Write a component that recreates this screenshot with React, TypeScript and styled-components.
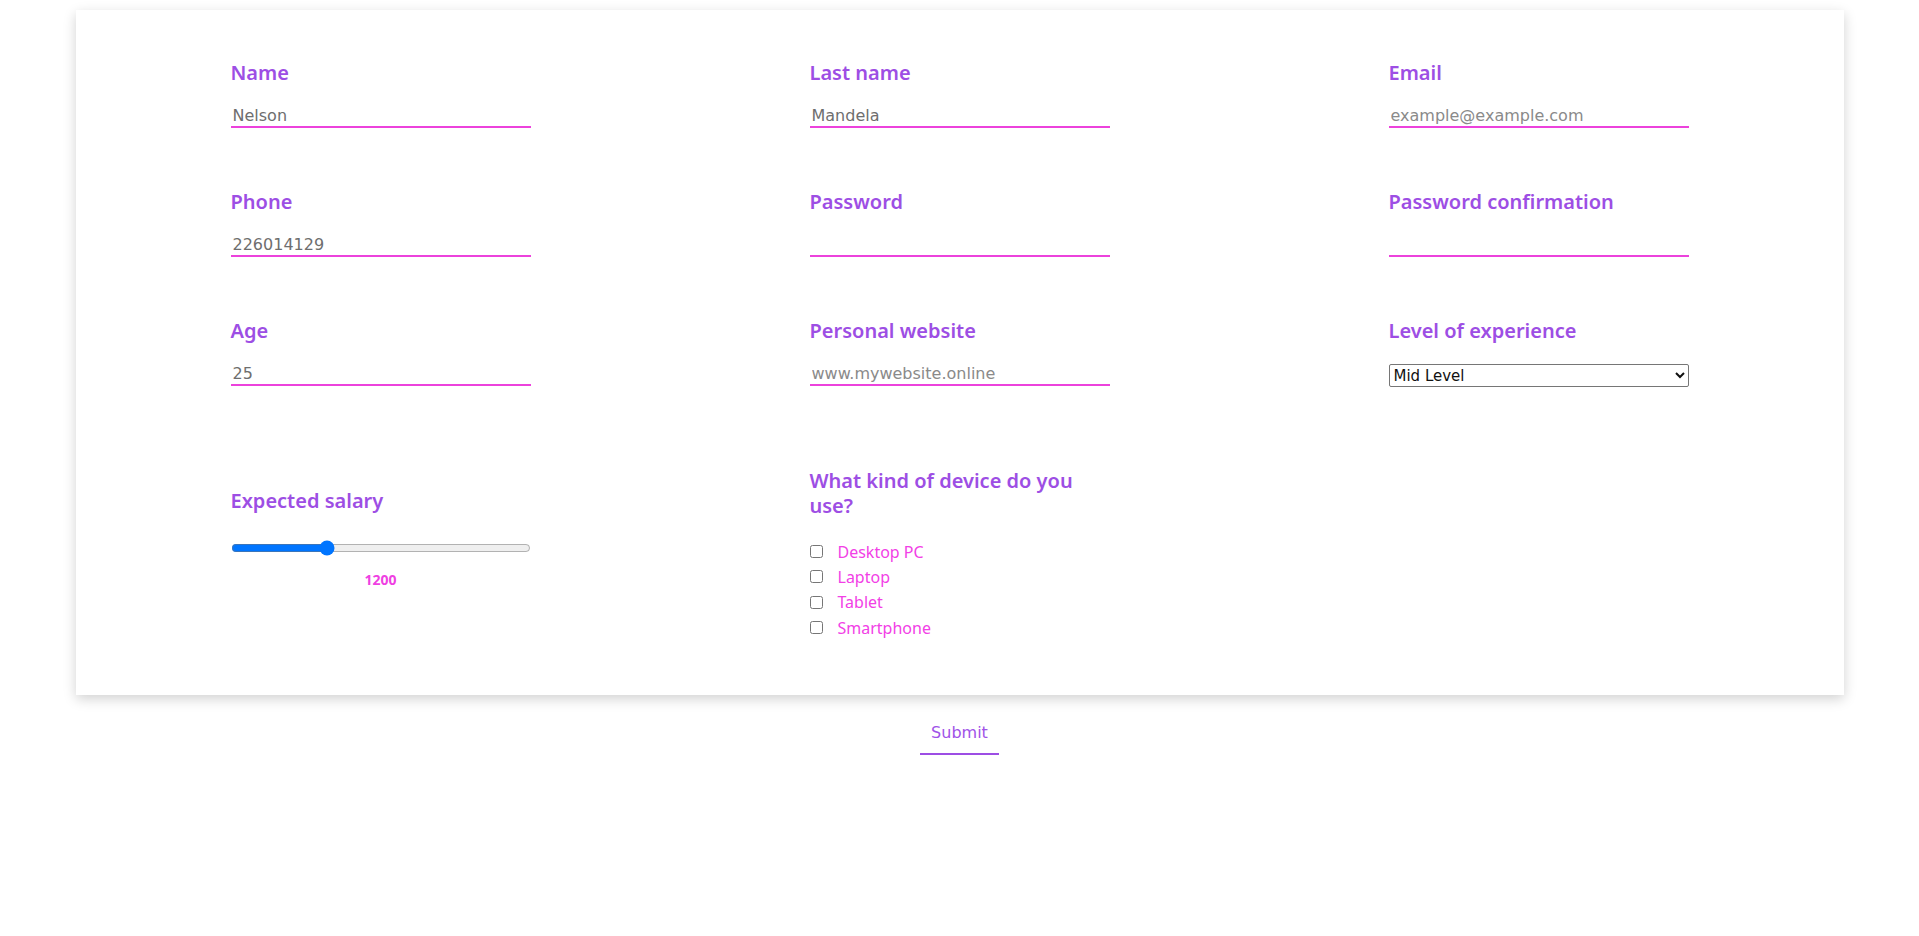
import React, { useState } from "react";
import styled, { createGlobalStyle } from "styled-components";

const Global = createGlobalStyle`
  html, body { margin: 0; padding: 0; background: #ffffff; }
  body { font-family: "DejaVu Sans", sans-serif; }
  * { box-sizing: border-box; }
`;

const Page = styled.main`
  display: flex;
  flex-direction: column;
  align-items: center;
  padding-top: 10px;
`;

const Card = styled.form`
  width: 1768px;
  background: #ffffff;
  box-shadow: 0 4px 12px rgba(0, 0, 0, 0.18);
  padding: 50px 0 55px;
`;

const Grid = styled.div`
  display: grid;
  grid-template-columns: repeat(3, 300px);
  column-gap: 279px;
  row-gap: 61px;
  justify-content: center;
  align-items: start;
`;

const Field = styled.div<{ $shift?: number }>`
  display: flex;
  flex-direction: column;
  margin-top: ${(p) => p.$shift ?? 0}px;
`;

const Label = styled.label<{ $gap?: number }>`
  font-family: "Noto Sans", sans-serif;
  font-weight: 600;
  font-size: 20px;
  line-height: 25px;
  color: #9d4ee4;
  margin-bottom: ${(p) => p.$gap ?? 19}px;
`;

const TextInput = styled.input`
  width: 300px;
  border: none;
  border-bottom: 2px solid #ec42dc;
  outline: none;
  padding: 1px 2px;
  font-family: "DejaVu Sans", sans-serif;
  font-size: 16px;
  line-height: 20px;
  height: 24px;
  color: #6e6e6e;
  background: transparent;
  &::placeholder { color: #8a8a8a; }
`;

const Select = styled.select`
  width: 300px;
  height: 23px;
  margin-top: 2px;
  font-family: "DejaVu Sans", sans-serif;
  font-size: 15px;
  color: #111;
  border: 1px solid #767676;
  border-radius: 2px;
  background: #fff;
`;

const Range = styled.input`
  width: 300px;
  margin: 27px 0 0;
  accent-color: #0075ff;
`;

const RangeValue = styled.output`
  display: block;
  text-align: center;
  font-family: "Noto Sans", sans-serif;
  font-weight: 700;
  font-size: 14px;
  line-height: 18px;
  color: #ef40e2;
  margin-top: 15px;
`;

const CheckList = styled.ul`
  list-style: none;
  margin: 21px 0 0;
  padding: 0;
  display: flex;
  flex-direction: column;
`;

const CheckItem = styled.li`
  display: flex;
  align-items: center;
  height: 25.33px;
`;

const Box = styled.input`
  width: 13px;
  height: 13px;
  margin: 0 15px 0 0;
`;

const CheckText = styled.label`
  font-family: "Noto Sans", sans-serif;
  font-size: 16px;
  color: #f240e6;
`;

const Submit = styled.button`
  margin-top: 18px;
  background: none;
  border: none;
  border-bottom: 2px solid #9d4ee4;
  padding: 10px 11px 10px;
  font-family: "DejaVu Sans", sans-serif;
  font-size: 16px;
  line-height: 20px;
  color: #a052e8;
  cursor: pointer;
`;

type TF = { id: string; label: string; value?: string; placeholder?: string; type?: string };

const textFields: TF[] = [
  { id: "name", label: "Name", value: "Nelson" },
  { id: "lastname", label: "Last name", value: "Mandela" },
  { id: "email", label: "Email", placeholder: "example@example.com", type: "email" },
  { id: "phone", label: "Phone", value: "226014129" },
  { id: "password", label: "Password", type: "password" },
  { id: "confirm", label: "Password confirmation", type: "password" },
  { id: "age", label: "Age", value: "25" },
  { id: "website", label: "Personal website", placeholder: "www.mywebsite.online" },
];

const devices = ["Desktop PC", "Laptop", "Tablet", "Smartphone"];

export default function App() {
  const [salary, setSalary] = useState(1200);
  return (
    <>
      <Global />
      <Page>
        <Card onSubmit={(e) => e.preventDefault()}>
          <Grid>
            {textFields.map((f) => (
              <Field key={f.id}>
                <Label htmlFor={f.id}>{f.label}</Label>
                <TextInput
                  id={f.id}
                  type={f.type ?? "text"}
                  defaultValue={f.value}
                  placeholder={f.placeholder}
                />
              </Field>
            ))}
            <Field>
              <Label htmlFor="level">Level of experience</Label>
              <Select id="level" defaultValue="mid">
                <option value="junior">Junior</option>
                <option value="mid">Mid Level</option>
                <option value="senior">Senior</option>
              </Select>
            </Field>
            <Field $shift={40}>
              <Label htmlFor="salary" $gap={0}>Expected salary</Label>
              <Range
                id="salary"
                type="range"
                min={200}
                max={3400}
                value={salary}
                onChange={(e) => setSalary(Number(e.target.value))}
              />
              <RangeValue htmlFor="salary">{salary}</RangeValue>
            </Field>
            <Field $shift={20}>
              <Label as="span" $gap={0}>What kind of device do you use?</Label>
              <CheckList>
                {devices.map((d) => (
                  <CheckItem key={d}>
                    <Box type="checkbox" id={d} />
                    <CheckText htmlFor={d}>{d}</CheckText>
                  </CheckItem>
                ))}
              </CheckList>
            </Field>
          </Grid>
        </Card>
        <Submit type="submit">Submit</Submit>
      </Page>
    </>
  );
}
